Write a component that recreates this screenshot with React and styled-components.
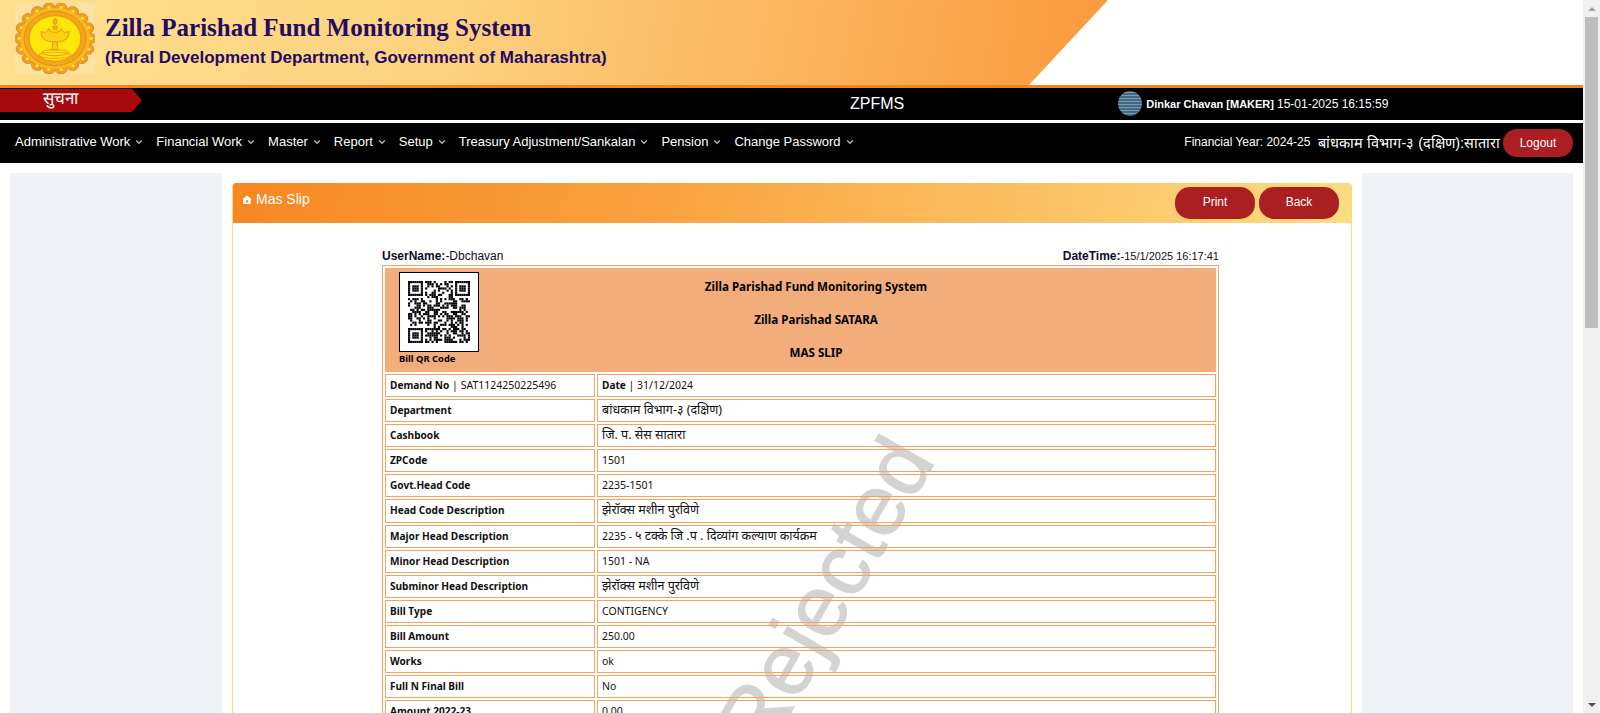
import React from "react";
import styled, { createGlobalStyle } from "styled-components";
import { ChevronDown } from "lucide-react";

const GlobalStyle = createGlobalStyle`
  html, body {
    height: 100%;
    overflow: hidden;
  }
  body {
    margin: 0;
    background: #fff;
    font-family: "Liberation Sans", Arial, sans-serif;
  }
`;

const Shell = styled.div`
  display: flex;
  height: 713px;
  overflow: hidden;
`;

const Page = styled.div`
  flex: 1;
  min-width: 0;
  overflow: hidden;
`;

const ScrollRail = styled.div`
  flex: 0 0 17px;
  display: flex;
  flex-direction: column;
  background: #f0f0f0;
`;

const ScrollArrow = styled.div`
  flex: 0 0 17px;
  display: flex;
  align-items: center;
  justify-content: center;

  &::before {
    content: "";
    border-left: 4px solid transparent;
    border-right: 4px solid transparent;
    ${(p) => (p.$down ? "border-top: 4px solid #505050;" : "border-bottom: 4px solid #a3a3a3;")}
  }
`;

const ScrollTrack = styled.div`
  flex: 1;
  padding: 0 2px;
`;

const ScrollThumb = styled.div`
  height: 311px;
  background: #bebebe;
`;

const Header = styled.header`
  height: 85px;
  border-bottom: 3px solid #f58220;
  background: #fff;
`;

const Banner = styled.div`
  width: 1108px;
  height: 85px;
  display: flex;
  align-items: flex-start;
  background: linear-gradient(100deg, #fee08f 0%, #fdd27f 40%, #f89a3c 100%);
  clip-path: polygon(0 0, 100% 0, 1029px 100%, 0 100%);
`;

const LogoBox = styled.div`
  width: 80px;
  height: 71px;
  margin: 3px 0 0 15px;
  background: #fde3a0;
`;

const HeaderText = styled.div`
  margin-left: 10px;
  color: #230a63;
`;

const Title = styled.h1`
  margin: 13px 0 0;
  font: bold 25px/30px "Liberation Serif", "Times New Roman", serif;
`;

const SubTitle = styled.div`
  margin-top: 5px;
  font: bold 17px/20px "Liberation Sans", Arial, sans-serif;
`;

const InfoBar = styled.div`
  height: 32px;
  display: flex;
  align-items: flex-start;
  background: #000;
  color: #fff;
`;

const Notice = styled.div`
  width: 142px;
  height: 23px;
  margin-top: 1px;
  padding-left: 43px;
  box-sizing: border-box;
  background: #a60a0c;
  clip-path: polygon(0 0, 132px 0, 142px 50%, 132px 100%, 0 100%);
  font-size: 17px;
  line-height: 20px;
`;

const AppName = styled.div`
  margin: 7px 0 0 708px;
  font-size: 16px;
  line-height: 18px;
`;

const UserInfo = styled.div`
  display: flex;
  align-items: center;
  margin: 3px 0 0 214px;
  font-size: 12px;
`;

const Avatar = styled.div`
  width: 24px;
  height: 25px;
  margin-right: 4px;
  border-radius: 50%;
  background: repeating-linear-gradient(0deg, #3f6a86 0 2px, #7f9aab 2px 3px);
`;

const UserName = styled.b`
  margin-right: 3px;
  font-size: 11px;
`;

const NavBar = styled.nav`
  height: 40px;
  margin-top: 3px;
  display: flex;
  align-items: center;
  padding: 0 10px 0 15px;
  background: #000;
  color: #fff;
`;

const NavItem = styled.div`
  display: flex;
  align-items: center;
  margin-right: 12px;
  padding-bottom: 3px;
  font-size: 13px;
  white-space: nowrap;

  svg {
    margin-left: 4px;
    color: #b5b5b5;
  }
`;

const NavRight = styled.div`
  display: flex;
  align-items: center;
  margin-left: auto;
  font-size: 12px;
`;

const YearLabel = styled.span`
  padding-bottom: 3px;
`;

const Office = styled.span`
  margin: 0 3px 0 8px;
  padding-bottom: 3px;
  font-size: 14.5px;
`;

const LogoutButton = styled.button`
  width: 70px;
  height: 28px;
  border: 0;
  border-radius: 14px;
  background: #ab1e22;
  color: #fff;
  font: 12px "Liberation Sans", Arial, sans-serif;
`;

const Main = styled.main`
  display: grid;
  grid-template-columns: 212px 1fr 211px;
  gap: 10px;
  padding: 10px;
`;

const SidePanel = styled.aside`
  background: #eff2f7;
  min-height: 1380px;
`;

const Card = styled.section`
  margin-top: 10px;
  border: 1px solid #fdd67f;
  border-top: 0;
  border-radius: 4px 4px 0 0;
  overflow: hidden;
`;

const CardHeader = styled.div`
  height: 40px;
  display: flex;
  align-items: center;
  justify-content: space-between;
  padding: 0 12px 0 9px;
  background: linear-gradient(100deg, #f68722 0%, #f9a441 40%, #fddc82 100%);
  color: #fff;
`;

const CardTitle = styled.div`
  display: flex;
  align-items: center;
  gap: 4px;
  margin-top: -8px;
  font-size: 14px;
`;

const CardActions = styled.div`
  display: flex;
  gap: 4px;
`;

const ActionButton = styled.button`
  width: 80px;
  height: 32px;
  padding-bottom: 3px;
  border: 0;
  border-radius: 15px;
  background: #ab1e22;
  color: #fff;
  font: 12px "Liberation Sans", Arial, sans-serif;
`;

const Slip = styled.div`
  position: relative;
  width: 837px;
  margin: 24px 0 0 149px;
`;

const SlipMeta = styled.div`
  display: flex;
  justify-content: space-between;
  height: 18px;
  font-size: 12px;
  line-height: 18px;
  color: #0d0d2b;

  small {
    font-size: 11px;
  }
`;

const Watermark = styled.div`
  position: absolute;
  left: 271px;
  top: 297px;
  color: #d3d3d3;
  font-size: 87px;
  line-height: 100px;
  white-space: nowrap;
  transform: rotate(-60deg);
  -webkit-text-stroke: 1px #d3d3d3;
`;

const Table = styled.table`
  position: relative;
  width: 100%;
  table-layout: fixed;
  border: 1px solid #f4a460;
  border-spacing: 2px;
  font-family: "Noto Sans", Tahoma, sans-serif;
  font-size: 10.5px;
  color: #111;
`;

const LabelColumn = styled.col`
  width: 210px;
`;

const TitleCell = styled.td`
  height: 104px;
  padding: 0;
  background: #f2ad7b;
`;

const TitleLayout = styled.div`
  display: grid;
  grid-template-columns: 94px 1fr;
  padding-right: 63px;
  height: 100%;
`;

const QrColumn = styled.div`
  padding: 4px 0 0 14px;
  font-size: 9.4px;
  font-weight: 700;
  line-height: 14px;
  color: #000;
`;

const QrBox = styled.div`
  width: 78px;
  height: 78px;
  border: 1px solid #000;
  background: #fff;

  svg {
    display: block;
    margin: 8px;
  }
`;

const TitleLines = styled.div`
  display: flex;
  flex-direction: column;
  gap: 15px;
  padding-top: 10px;
  text-align: center;
  font-size: 11.6px;
  font-weight: 700;
  line-height: 18px;
  color: #000;
`;

const Cell = styled.td`
  height: ${(p) => (p.$tall ? 20 : 19)}px;
  padding: 0 4px 2px;
  border: 1px solid #f4a460;
  box-sizing: content-box;
  line-height: 14px;
  white-space: nowrap;
  overflow: hidden;

  b {
    font-size: 10.1px;
  }
`;

const Hindi = styled.span`
  font-size: 12.5px;
`;

// finder pattern + seeded noise, the reference QR is not meant to be scanned
function buildQr(size) {
  const cells = [];
  let seed = 1124;
  const finder = (x, y, cx, cy) => {
    const dx = x - cx;
    const dy = y - cy;
    if (dx < -1 || dy < -1 || dx > 7 || dy > 7) return null;
    if (dx < 0 || dy < 0 || dx > 6 || dy > 6) return false;
    if (dx === 0 || dy === 0 || dx === 6 || dy === 6) return true;
    return dx >= 2 && dx <= 4 && dy >= 2 && dy <= 4;
  };
  for (let y = 0; y < size; y++) {
    for (let x = 0; x < size; x++) {
      seed = (seed * 1103515245 + 12345) & 0x7fffffff;
      let on = ((seed >> 16) & 3) < 2;
      [[0, 0], [size - 7, 0], [0, size - 7]].forEach(([cx, cy]) => {
        const f = finder(x, y, cx, cy);
        if (f !== null) on = f;
      });
      if (on) cells.push([x, y]);
    }
  }
  return cells;
}

const qrCells = buildQr(29);

const QrCode = () => (
  <svg width="62" height="62" viewBox="0 0 29 29">
    {qrCells.map(([x, y]) => (
      <rect key={`${x}-${y}`} x={x} y={y} width="1" height="1" fill="#000" />
    ))}
  </svg>
);

const HomeIcon = () => (
  <svg width="10" height="9" viewBox="0 0 10 9">
    <path d="M5 0.5L9.6 4.2 8.8 4.6V8.2Q8.8 9 8 9H2Q1.2 9 1.2 8.2V4.6L0.4 4.2z" fill="#fff" />
    <rect x="4.1" y="5" width="1.8" height="2.6" fill="#f78d2a" />
  </svg>
);

const Seal = () => {
  const points = Array.from({ length: 18 });
  return (
    <svg width="80" height="71" viewBox="0 0 80 71" preserveAspectRatio="none">
      <g transform="translate(40 35.5) scale(1 0.88)">
        {points.map((_, i) => {
          const a = (i / 18) * Math.PI * 2;
          return <circle key={i} cx={35 * Math.cos(a)} cy={35 * Math.sin(a)} r="6" fill="#f0a020" stroke="#e07a20" strokeWidth="0.8" />;
        })}
        <circle r="35" fill="#f6b81c" />
        {points.map((_, i) => {
          const a = (i / 18) * Math.PI * 2;
          return <circle key={i} cx={36 * Math.cos(a)} cy={36 * Math.sin(a)} r="1.6" fill="#ffe640" />;
        })}
        <circle r="31" fill="#f3a51c" stroke="#e5871c" />
        <circle r="26" fill="#ffe70a" stroke="#f09a18" strokeWidth="1.5" />
        <g fill="none" stroke="#ee9a18" strokeWidth="1.1">
          <path d="M0 -23c-2.5 2.5-2.5 5 0 7.5 2.5-2.5 2.5-5 0-7.5z" fill="#f3b01c" />
          <path d="M-2.5 -14h5l-1 4h-3z" fill="#f3b01c" />
          <path d="M-14 -8c0 9 5 12 14 12s14-3 14-12c-4 2-6 1-8-3-1 3-3 4-6 4s-5-1-6-4c-2 4-4 5-8 3z" fill="#f8d214" />
          <path d="M-2 4h4l1 9h-6z" fill="#f8d214" />
          <ellipse cx="0" cy="16" rx="13" ry="3.5" />
          <ellipse cx="0" cy="19" rx="16" ry="3.5" />
        </g>
      </g>
    </svg>
  );
};

const menu = ["Administrative Work", "Financial Work", "Master", "Report", "Setup", "Treasury Adjustment/Sankalan", "Pension", "Change Password"];

const rows = [
  { head: "Department", value: <Hindi>बांधकाम विभाग-३ (दक्षिण)</Hindi> },
  { head: "Cashbook", value: <Hindi>जि. प. सेस सातारा</Hindi> },
  { head: "ZPCode", value: "1501" },
  { head: "Govt.Head Code", value: "2235-1501" },
  { head: "Head Code Description", value: <Hindi>झेरॉक्स मशीन पुरविणे</Hindi>, tall: true },
  { head: "Major Head Description", value: <>2235 - <Hindi>५ टक्के जि .प . दिव्यांग कल्याण कार्यक्रम</Hindi></> },
  { head: "Minor Head Description", value: "1501 - NA" },
  { head: "Subminor Head Description", value: <Hindi>झेरॉक्स मशीन पुरविणे</Hindi> },
  { head: "Bill Type", value: "CONTIGENCY" },
  { head: "Bill Amount", value: "250.00" },
  { head: "Works", value: "ok" },
  { head: "Full N Final Bill", value: "No" },
  { head: "Amount 2022-23", value: "0.00" },
];

const App = () => {
  return (
    <Shell>
      <GlobalStyle />
      <Page>
        <Header>
          <Banner>
            <LogoBox>
              <Seal />
            </LogoBox>
            <HeaderText>
              <Title>Zilla Parishad Fund Monitoring System</Title>
              <SubTitle>(Rural Development Department, Government of Maharashtra)</SubTitle>
            </HeaderText>
          </Banner>
        </Header>
        <InfoBar>
          <Notice>सुचना</Notice>
          <AppName>ZPFMS</AppName>
          <UserInfo>
            <Avatar />
            <UserName>Dinkar Chavan [MAKER]</UserName>
            15-01-2025 16:15:59
          </UserInfo>
        </InfoBar>
        <NavBar>
          {menu.map((item) => (
            <NavItem key={item}>
              {item}
              <ChevronDown size={10} strokeWidth={3} />
            </NavItem>
          ))}
          <NavRight>
            <YearLabel>Financial Year: 2024-25</YearLabel>
            <Office>बांधकाम विभाग-३ (दक्षिण):सातारा</Office>
            <LogoutButton>Logout</LogoutButton>
          </NavRight>
        </NavBar>
        <Main>
          <SidePanel />
          <Card>
            <CardHeader>
              <CardTitle>
                <HomeIcon />
                Mas Slip
              </CardTitle>
              <CardActions>
                <ActionButton>Print</ActionButton>
                <ActionButton>Back</ActionButton>
              </CardActions>
            </CardHeader>
            <Slip>
              <Watermark>Rejected</Watermark>
              <SlipMeta>
                <span><b>UserName:</b>-Dbchavan</span>
                <span><b>DateTime:</b><small>-15/1/2025 16:17:41</small></span>
              </SlipMeta>
              <Table>
                <colgroup>
                  <LabelColumn />
                  <col />
                </colgroup>
                <tbody>
                  <tr>
                    <TitleCell colSpan={2}>
                      <TitleLayout>
                        <QrColumn>
                          <QrBox>
                            <QrCode />
                          </QrBox>
                          Bill QR Code
                        </QrColumn>
                        <TitleLines>
                          <span>Zilla Parishad Fund Monitoring System</span>
                          <span>Zilla Parishad SATARA</span>
                          <span>MAS SLIP</span>
                        </TitleLines>
                      </TitleLayout>
                    </TitleCell>
                  </tr>
                  <tr>
                    <Cell><b>Demand No</b> | SAT1124250225496</Cell>
                    <Cell><b>Date</b> | 31/12/2024</Cell>
                  </tr>
                  {rows.map((row) => (
                    <tr key={row.head}>
                      <Cell $tall={row.tall}><b>{row.head}</b></Cell>
                      <Cell $tall={row.tall}>{row.value}</Cell>
                    </tr>
                  ))}
                </tbody>
              </Table>
            </Slip>
          </Card>
          <SidePanel />
        </Main>
      </Page>
      <ScrollRail>
        <ScrollArrow />
        <ScrollTrack>
          <ScrollThumb />
        </ScrollTrack>
        <ScrollArrow $down />
      </ScrollRail>
    </Shell>
  );
};

export default App;
